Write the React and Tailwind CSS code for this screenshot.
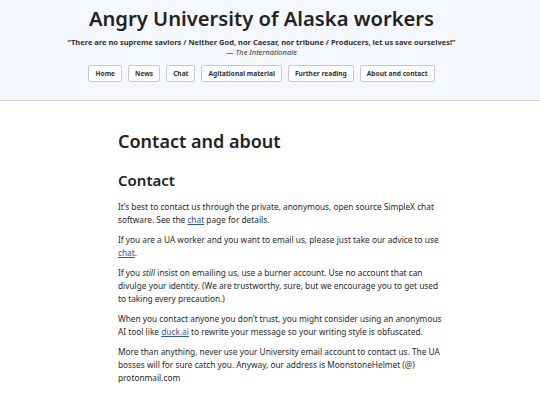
export default function App() {
  const nav = ["Home", "News", "Chat", "Agitational material", "Further reading", "About and contact"];
  const link = "text-[#2f55b0] underline";

  return (
    <div className="min-h-screen bg-white text-[#2a2a2a]" style={{ fontFamily: '"Noto Sans", sans-serif' }}>
      {/* Header */}
      <header className="bg-[#f5f8fe] border-b border-[#d4d2e0] pt-[4px] pb-[18px] pr-[17px] flex flex-col items-center">
        <h1 className="text-[20.2px] font-semibold leading-[28px] text-[#222]">Angry University of Alaska workers</h1>
        <p className="mt-[5px] text-[7.5px] font-bold leading-[10px] text-[#333]">
          “There are no supreme saviors / Neither God, nor Caesar, nor tribune / Producers, let us save ourselves!”
        </p>
        <p className="text-[7.5px] leading-[11px] text-[#333]">
          — <i>The Internationale</i>
        </p>
        <nav className="mt-[7px] flex gap-[6px]">
          {nav.map((n) => (
            <span
              key={n}
              className="px-[6px] h-[17px] flex items-center text-[6.6px] font-bold text-[#333] bg-white border border-[#c6c9d4] rounded-[2px]"
            >
              {n}
            </span>
          ))}
        </nav>
      </header>

      {/* Content */}
      <main className="ml-[118px] w-[325px] pt-[27px]">
        <h1 className="text-[18px] font-semibold leading-[26px] text-[#222]">Contact and about</h1>
        <h2 className="mt-[15px] text-[15px] font-semibold leading-[22px] text-[#222]">Contact</h2>
        <div className="mt-[9px] flex flex-col gap-[7px] text-[8.3px] leading-[13px]">
          <p>
            It’s best to contact us through the private, anonymous, open source SimpleX chat software. See the{" "}
            <a className={link}>chat</a> page for details.
          </p>
          <p>
            If you are a UA worker and you want to email us, please just take our advice to use{" "}
            <a className={link}>chat</a>.
          </p>
          <p>
            If you <i>still</i> insist on emailing us, use a burner account. Use no account that can divulge your
            identity. (We are trustworthy, sure, but we encourage you to get used to taking every precaution.)
          </p>
          <p>
            When you contact anyone you don’t trust, you might consider using an anonymous AI tool like{" "}
            <a className={link}>duck.ai</a> to rewrite your message so your writing style is obfuscated.
          </p>
          <p>
            More than anything, never use your University email account to contact us. The UA bosses will for sure
            catch you. Anyway, our address is MoonstoneHelmet (@) protonmail.com
          </p>
        </div>
        <h2 className="mt-[16px] text-[15px] font-semibold leading-[22px] text-[#222]">About</h2>
      </main>
    </div>
  );
}
